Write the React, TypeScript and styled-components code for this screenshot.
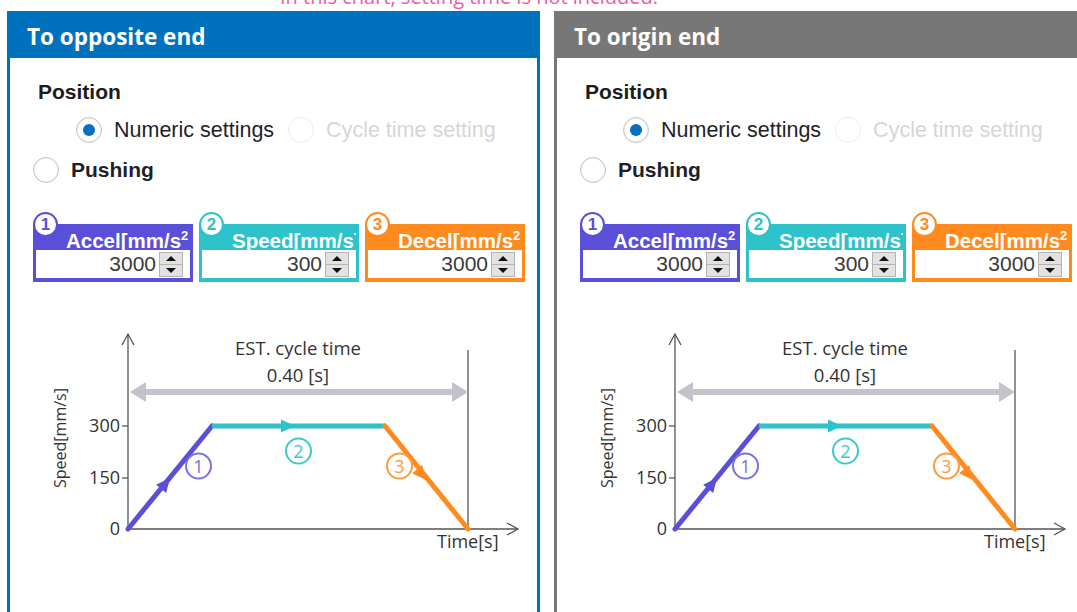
import React from "react";
import styled, { createGlobalStyle } from "styled-components";

const GlobalStyle = createGlobalStyle`
  html, body { margin: 0; padding: 0; background: #ffffff; overflow: hidden; }
  body { font-family: "Liberation Sans", Arial, sans-serif; }
`;

const C = {
  accel: "#5a4fd9",
  speed: "#2ec2ca",
  decel: "#ff8b1f",
};

const Page = styled.div`
  width: 1077px;
  height: 612px;
  overflow: hidden;
`;

const NoteRow = styled.div`
  height: 11px;
  display: flex;
  padding-left: 280px;
`;

const Note = styled.div`
  margin-top: -14px;
  font-family: "Open Sans", sans-serif;
  font-size: 20px;
  line-height: 22px;
  color: #ec5aa0;
  white-space: nowrap;
`;

const PanelRow = styled.div`
  display: flex;
  gap: 14px;
  padding-left: 7px;
`;

const Panel = styled.section<{ $color: string }>`
  flex: 0 0 533px;
  height: 640px;
  box-sizing: border-box;
  border: 3px solid ${(p) => p.$color};
  background: #fff;
`;

const PanelHeader = styled.header<{ $color: string }>`
  height: 47px;
  margin: -3px -3px 0;
  padding-left: 20px;
  display: flex;
  align-items: center;
  background: ${(p) => p.$color};
  box-sizing: border-box;
  color: #ffffff;
  font-family: "Open Sans", sans-serif;
  font-weight: 700;
  font-size: 22.5px;
  padding-top: 4px;
`;

const PanelBody = styled.div`
  display: flex;
  flex-direction: column;
  padding-top: 22px;
`;

const SectionLabel = styled.div`
  margin-left: 28px;
  font-weight: 700;
  font-size: 21px;
  line-height: 24px;
  color: #1c1c1c;
`;

const RadioRow = styled.div<{ $indent: number }>`
  display: flex;
  align-items: center;
  height: 28px;
  margin-top: 12px;
  margin-left: ${(p) => p.$indent}px;
`;

const RadioCircle = styled.span<{ $checked?: boolean; $disabled?: boolean }>`
  width: 26px;
  height: 26px;
  box-sizing: border-box;
  border-radius: 50%;
  border: 1px solid ${(p) => (p.$disabled ? "#ececec" : "#c4c4c4")};
  background: #fff;
  box-shadow: ${(p) => (p.$disabled ? "none" : "inset 0 0 0 1px #f2f2f2")};
  display: flex;
  align-items: center;
  justify-content: center;
  flex: 0 0 auto;
  &::after {
    content: "";
    display: ${(p) => (p.$checked ? "block" : "none")};
    width: 12px;
    height: 12px;
    border-radius: 50%;
    background: #0b6fc0;
  }
`;

const RadioText = styled.span<{ $bold?: boolean; $disabled?: boolean }>`
  margin-left: 12px;
  margin-right: 14px;
  font-size: ${(p) => (p.$bold ? 21 : 21.5)}px;
  font-weight: ${(p) => (p.$bold ? 700 : 400)};
  color: ${(p) => (p.$disabled ? "#d6d6d6" : "#1f1f2a")};
  white-space: nowrap;
`;

const InputRow = styled.div`
  display: flex;
  gap: 6px;
  margin-top: 40px;
  margin-left: 23px;
`;

const ParamBox = styled.div<{ $color: string }>`
  position: relative;
  width: 160px;
  box-sizing: border-box;
  background: ${(p) => p.$color};
  border: 2px solid ${(p) => p.$color};
  padding: 0 1px 2px;
  display: flex;
  flex-direction: column;
`;

const ParamLabel = styled.div`
  height: 24px;
  padding-left: 30px;
  overflow: hidden;
  white-space: nowrap;
  color: #ffffff;
  font-weight: 700;
  font-size: 20.5px;
  line-height: 29px;
  sup {
    font-size: 13px;
    vertical-align: 8px;
    line-height: 0;
  }
`;

const Badge = styled.span<{ $color: string }>`
  position: absolute;
  left: -2px;
  top: -14px;
  width: 25px;
  height: 25px;
  box-sizing: border-box;
  border-radius: 50%;
  background: #ffffff;
  border: 2px solid ${(p) => p.$color};
  color: ${(p) => p.$color};
  display: flex;
  align-items: center;
  justify-content: center;
  font-weight: 700;
  font-size: 17px;
`;

const ValueField = styled.div`
  height: 28px;
  background: #ffffff;
  display: flex;
  align-items: center;
  justify-content: flex-end;
  padding-right: 7px;
`;

const ValueText = styled.span`
  font-size: 21px;
  color: #3a3a3a;
  margin-right: 3px;
`;

const Spinner = styled.span`
  width: 24px;
  height: 25px;
  box-sizing: border-box;
  background: #e2e2e2;
  border: 1px solid #b5b5b5;
  display: flex;
  flex-direction: column;
`;

const SpinHalf = styled.span<{ $down?: boolean }>`
  flex: 1;
  display: flex;
  align-items: center;
  justify-content: center;
  border-top: ${(p) => (p.$down ? "1px solid #b5b5b5" : "none")};
  &::after {
    content: "";
    width: 0;
    height: 0;
    border-left: 5px solid transparent;
    border-right: 5px solid transparent;
    ${(p) =>
      p.$down ? "border-top: 5px solid #111;" : "border-bottom: 5px solid #111;"}
  }
`;

const ChartSvg = styled.svg`
  display: block;
  margin-top: 38px;
  font-family: "Open Sans", sans-serif;
`;

type Param = { n: number; label: string; sup?: boolean; value: string; color: string };

const params: Param[] = [
  { n: 1, label: "Accel[mm/s", sup: true, value: "3000", color: C.accel },
  { n: 2, label: "Speed[mm/s]", value: "300", color: C.speed },
  { n: 3, label: "Decel[mm/s", sup: true, value: "3000", color: C.decel },
];

function arrowHead(x: number, y: number, angle: number, color: string) {
  return (
    <polygon
      points="0,0 -14,-6.5 -14,6.5"
      fill={color}
      transform={`translate(${x} ${y}) rotate(${angle})`}
    />
  );
}

function Chart() {
  const axis = "#555555";
  const text = "#333333";
  return (
    <ChartSvg width="526" height="240" viewBox="0 0 526 240">
      {/* Axes */}
      <line x1="118" y1="14" x2="118" y2="210" stroke={axis} strokeWidth="1.3" />
      <polyline points="112,25 118,14 124,25" fill="none" stroke={axis} strokeWidth="1.3" />
      <line x1="118" y1="209" x2="508" y2="209" stroke={axis} strokeWidth="1.3" />
      <polyline points="497,203 508,209 497,215" fill="none" stroke={axis} strokeWidth="1.3" />
      <line x1="458" y1="30" x2="458" y2="209" stroke={axis} strokeWidth="1.3" />
      <line x1="112" y1="106" x2="118" y2="106" stroke={axis} strokeWidth="1.3" />
      <line x1="112" y1="158" x2="118" y2="158" stroke={axis} strokeWidth="1.3" />

      {/* Cycle time arrow */}
      <line x1="132" y1="72" x2="444" y2="72" stroke="#c3c3cb" strokeWidth="6" />
      <polygon points="120,72 136,62 136,82" fill="#c3c3cb" />
      <polygon points="458,72 442,62 442,82" fill="#c3c3cb" />
      <text x="288" y="35" textAnchor="middle" fontSize="18.5" fill={text}>
        EST. cycle time
      </text>
      <text x="288" y="62" textAnchor="middle" fontSize="18.5" fill={text}>
        0.40 [s]
      </text>

      {/* Tick labels */}
      <text x="110" y="112" textAnchor="end" fontSize="18" fill={text}>300</text>
      <text x="110" y="164" textAnchor="end" fontSize="18" fill={text}>150</text>
      <text x="110" y="215" textAnchor="end" fontSize="18" fill={text}>0</text>
      <text
        x="0"
        y="0"
        textAnchor="middle"
        fontSize="16"
        fill={text}
        transform="translate(56 118) rotate(-90)"
      >
        Speed[mm/s]
      </text>
      <text x="427" y="228" fontSize="18" fill={text}>Time[s]</text>

      {/* Profile */}
      <line x1="118" y1="209" x2="202" y2="106" stroke={C.accel} strokeWidth="5" strokeLinecap="round" />
      <line x1="202" y1="106" x2="375" y2="106" stroke={C.speed} strokeWidth="5" />
      <line x1="375" y1="106" x2="458" y2="209" stroke={C.decel} strokeWidth="5" strokeLinecap="round" />
      {arrowHead(160, 158, -50.8, C.accel)}
      {arrowHead(285, 106, 0, C.speed)}
      {arrowHead(416, 160, 51.1, C.decel)}

      {/* Step markers */}
      {[
        { x: 188.5, y: 146, n: "1", c: "#7a70e6" },
        { x: 288.5, y: 131, n: "2", c: "#3cc8cf" },
        { x: 389.5, y: 146, n: "3", c: "#ff9a3c" },
      ].map((m) => (
        <g key={m.n}>
          <circle cx={m.x} cy={m.y} r="12.5" fill="#fff" stroke={m.c} strokeWidth="2" />
          <text x={m.x} y={m.y + 6.5} textAnchor="middle" fontSize="18" fill={m.c}>
            {m.n}
          </text>
        </g>
      ))}
    </ChartSvg>
  );
}

function DirectionPanel({ title, color }: { title: string; color: string }) {
  return (
    <Panel $color={color}>
      <PanelHeader $color={color}>{title}</PanelHeader>
      <PanelBody>
        <SectionLabel>Position</SectionLabel>
        <RadioRow $indent={66}>
          <RadioCircle $checked />
          <RadioText>Numeric settings</RadioText>
          <RadioCircle $disabled />
          <RadioText $disabled>Cycle time setting</RadioText>
        </RadioRow>
        <RadioRow $indent={23}>
          <RadioCircle />
          <RadioText $bold>Pushing</RadioText>
        </RadioRow>
        <InputRow>
          {params.map((p) => (
            <ParamBox key={p.n} $color={p.color}>
              <Badge $color={p.color}>{p.n}</Badge>
              <ParamLabel>
                {p.label}
                {p.sup && <sup>2</sup>}
              </ParamLabel>
              <ValueField>
                <ValueText>{p.value}</ValueText>
                <Spinner>
                  <SpinHalf />
                  <SpinHalf $down />
                </Spinner>
              </ValueField>
            </ParamBox>
          ))}
        </InputRow>
        <Chart />
      </PanelBody>
    </Panel>
  );
}

export default function App() {
  return (
    <Page>
      <GlobalStyle />
      <NoteRow>
        <Note>In this chart, setting time is not included.</Note>
      </NoteRow>
      <PanelRow>
        <DirectionPanel title="To opposite end" color="#0072bd" />
        <DirectionPanel title="To origin end" color="#777777" />
      </PanelRow>
    </Page>
  );
}
